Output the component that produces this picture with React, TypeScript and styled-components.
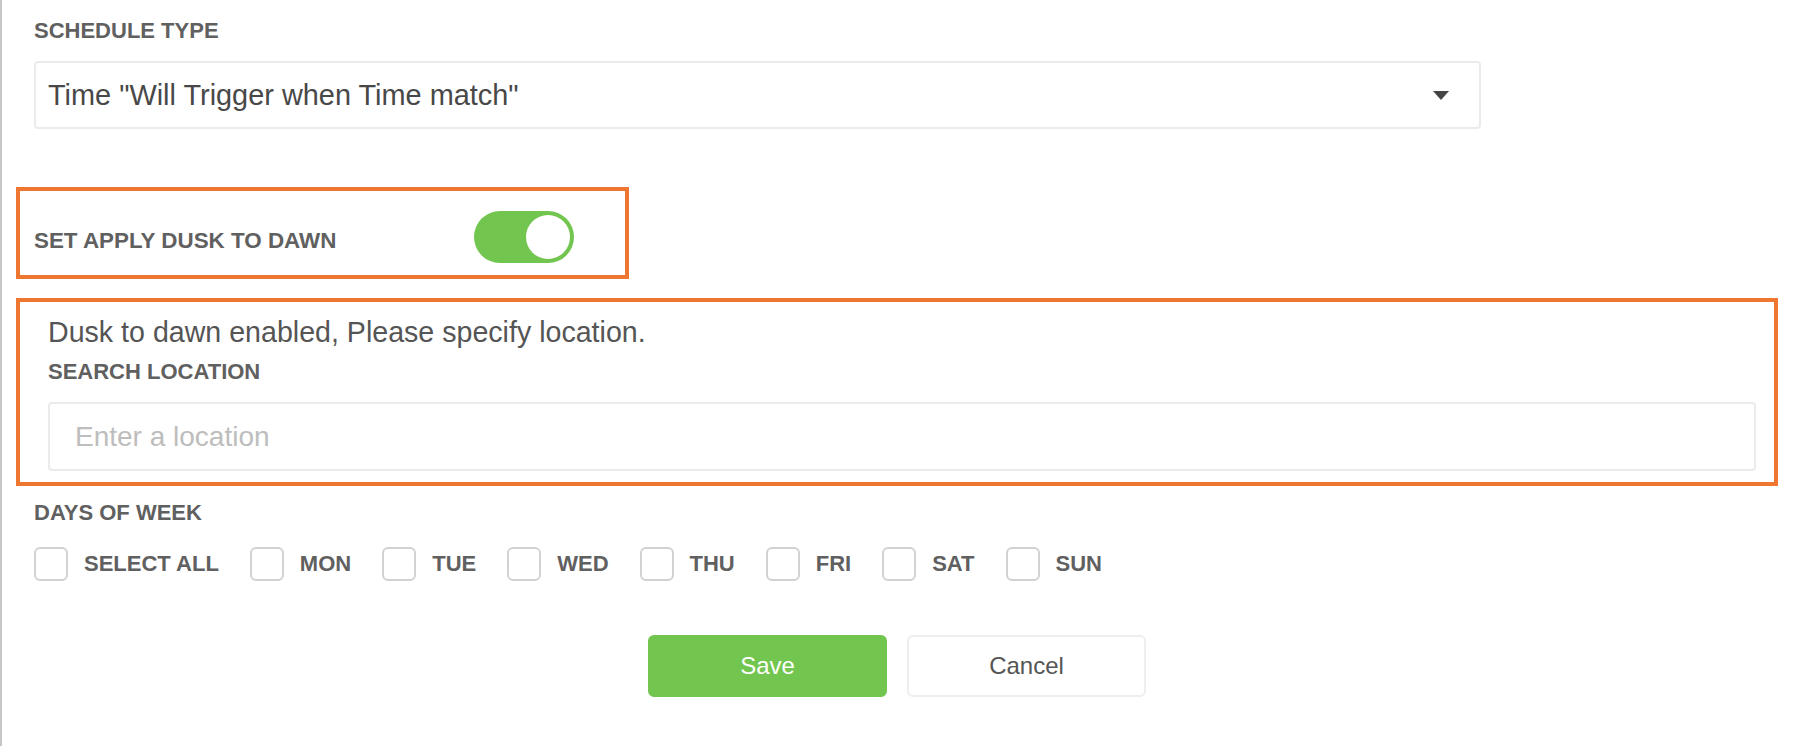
import React, { useState } from "react";
import styled, { createGlobalStyle } from "styled-components";

const GlobalStyle = createGlobalStyle`
  html, body {
    margin: 0;
    padding: 0;
    background: #ffffff;
  }
  body {
    font-family: "Liberation Sans", Helvetica, Arial, sans-serif;
    color: #555555;
  }
  * { box-sizing: border-box; }
`;

const Page = styled.div`
  min-height: 746px;
  border-left: 2px solid #c6c6c6;
  padding: 18px 22px 0 14px;
  display: flex;
  flex-direction: column;
`;

const Label = styled.div<{ $indent?: number }>`
  font-size: 22px;
  line-height: 26px;
  font-weight: 700;
  color: #606060;
  padding-left: ${(p) => p.$indent ?? 18}px;
  text-transform: uppercase;
`;

const SelectBox = styled.div`
  margin: 17px 0 0 18px;
  width: 1447px;
  height: 68px;
  border: 2px solid #ebebeb;
  border-radius: 4px;
  display: flex;
  align-items: center;
  justify-content: space-between;
  padding: 0 30px 0 12px;
  font-size: 28.9px;
  color: #484848;
`;

const Caret = styled.span`
  width: 0;
  height: 0;
  border-left: 8px solid transparent;
  border-right: 8px solid transparent;
  border-top: 9px solid #444;
`;

const Highlight = styled.div`
  border: 4px solid #ee7630;
`;

const DuskBox = styled(Highlight)`
  margin-top: 58px;
  width: 613px;
  height: 92px;
  display: grid;
  grid-template-columns: 440px auto;
  align-items: center;
  padding: 20px 0 12px 14px;
`;

const DuskLabel = styled(Label)`
  padding-left: 0;
  margin-top: 8px;
  font-size: 22.4px;
`;

const Toggle = styled.button<{ $on: boolean }>`
  width: 100px;
  height: 52px;
  border-radius: 26px;
  border: none;
  padding: 4px;
  background: ${(p) => (p.$on ? "#72c54e" : "#d6d6d6")};
  display: flex;
  justify-content: ${(p) => (p.$on ? "flex-end" : "flex-start")};
  cursor: pointer;
`;

const Knob = styled.span`
  width: 44px;
  height: 44px;
  border-radius: 50%;
  background: #ffffff;
`;

const LocationBox = styled(Highlight)`
  margin-top: 19px;
  width: 1762px;
  padding: 13px 18px 11px 28px;
  display: flex;
  flex-direction: column;
`;

const Note = styled.div`
  font-size: 28.6px;
  line-height: 34px;
  color: #555555;
`;

const LocationLabel = styled(Label)`
  padding-left: 0;
  margin-top: 10px;
`;

const LocationInput = styled.input`
  margin-top: 17px;
  height: 69px;
  width: 100%;
  border: 2px solid #ebebeb;
  border-radius: 4px;
  padding: 0 25px;
  font-family: inherit;
  font-size: 28px;
  color: #555;
  outline: none;
  &::placeholder {
    color: #bdbdbd;
  }
`;

const DaysLabel = styled(Label)`
  margin-top: 14px;
`;

const DaysRow = styled.div`
  margin: 21px 0 0 18px;
  display: flex;
  align-items: center;
  gap: 31px;
`;

const DayItem = styled.label`
  display: flex;
  align-items: center;
  gap: 16px;
  font-size: 22px;
  font-weight: 700;
  color: #606060;
  cursor: pointer;
`;

const Box = styled.span<{ $checked: boolean }>`
  width: 34px;
  height: 34px;
  border: 2px solid #d2d2d2;
  border-radius: 6px;
  background: ${(p) => (p.$checked ? "#72c54e" : "#fff")};
`;

const Actions = styled.div`
  margin-top: 54px;
  display: flex;
  justify-content: center;
  gap: 20px;
`;

const Button = styled.button<{ $primary?: boolean }>`
  width: 239px;
  height: 62px;
  border-radius: 6px;
  font-family: inherit;
  font-size: 24px;
  cursor: pointer;
  border: 2px solid ${(p) => (p.$primary ? "#72c54e" : "#eeeeee")};
  background: ${(p) => (p.$primary ? "#72c54e" : "#ffffff")};
  color: ${(p) => (p.$primary ? "#ffffff" : "#555555")};
`;

const DAYS = ["SELECT ALL", "MON", "TUE", "WED", "THU", "FRI", "SAT", "SUN"];

export default function App() {
  const [on, setOn] = useState(true);
  const [checked, setChecked] = useState<Record<string, boolean>>({});

  return (
    <>
      <GlobalStyle />
      <Page>
        <Label>Schedule Type</Label>
        <SelectBox>
          <span>Time "Will Trigger when Time match"</span>
          <Caret />
        </SelectBox>

        <DuskBox>
          <DuskLabel>Set Apply Dusk to Dawn</DuskLabel>
          <Toggle $on={on} onClick={() => setOn(!on)} aria-label="toggle">
            <Knob />
          </Toggle>
        </DuskBox>

        <LocationBox>
          <Note>Dusk to dawn enabled, Please specify location.</Note>
          <LocationLabel>Search Location</LocationLabel>
          <LocationInput placeholder="Enter a location" />
        </LocationBox>

        <DaysLabel>Days of Week</DaysLabel>
        <DaysRow>
          {DAYS.map((d) => (
            <DayItem
              key={d}
              onClick={() => setChecked({ ...checked, [d]: !checked[d] })}
            >
              <Box $checked={!!checked[d]} />
              {d}
            </DayItem>
          ))}
        </DaysRow>

        <Actions>
          <Button $primary>Save</Button>
          <Button>Cancel</Button>
        </Actions>
      </Page>
    </>
  );
}
